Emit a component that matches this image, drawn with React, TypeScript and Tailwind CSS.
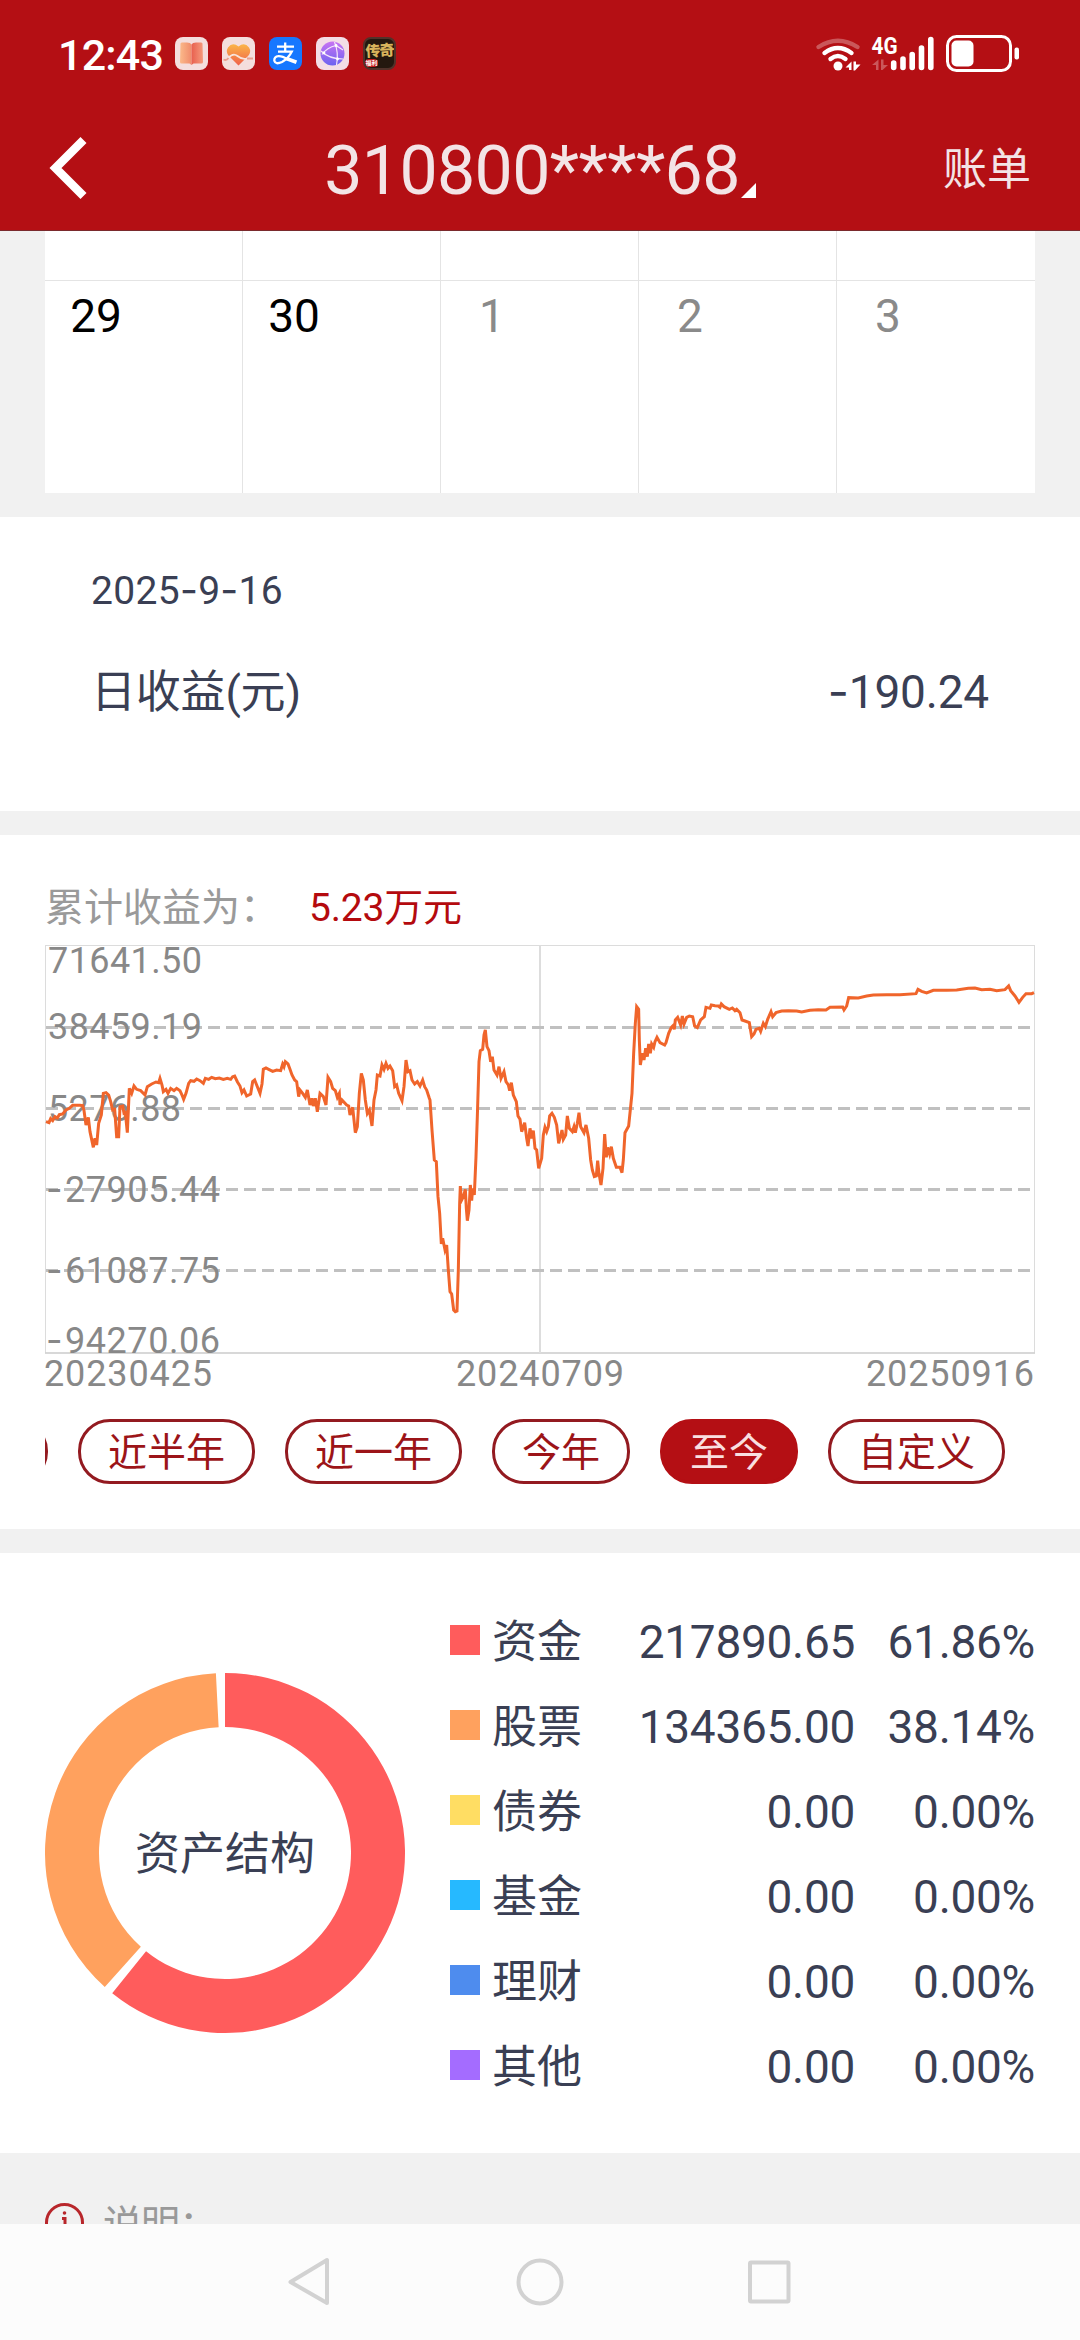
import type { ReactNode } from "react";

type Asset = {
  name: string;
  amount: string;
  percent: string;
  color: string;
};

const assets: Asset[] = [
  { name: "资金", amount: "217890.65", percent: "61.86%", color: "bg-[#ff5c5c]" },
  { name: "股票", amount: "134365.00", percent: "38.14%", color: "bg-[#ffa15e]" },
  { name: "债券", amount: "0.00", percent: "0.00%", color: "bg-[#ffdd63]" },
  { name: "基金", amount: "0.00", percent: "0.00%", color: "bg-[#26b9ff]" },
  { name: "理财", amount: "0.00", percent: "0.00%", color: "bg-[#4e8cee]" },
  { name: "其他", amount: "0.00", percent: "0.00%", color: "bg-[#a46cff]" }
];

const days = [
  { day: "29", current: true },
  { day: "30", current: true },
  { day: "1", current: false },
  { day: "2", current: false },
  { day: "3", current: false }
];

const ranges = [
  { label: "近半年", active: false },
  { label: "近一年", active: false },
  { label: "今年", active: false },
  { label: "至今", active: true },
  { label: "自定义", active: false }
];

const gridLines = [82.5, 163.5, 244.5, 325.5];

const yLabels = [
  { text: "71641.50", x: 3, y: 28, length: 154 },
  { text: "38459.19", x: 3, y: 94, length: 154 },
  { text: "5276.88", x: 3, y: 176, length: 133 },
  { text: "27905.44", x: 20, y: 257, length: 155 },
  { text: "61087.75", x: 20, y: 338, length: 155 },
  { text: "94270.06", x: 20, y: 408, length: 155 }
];

const xLabels = [
  { text: "20230425", x: -1 },
  { text: "20240709", x: 411 },
  { text: "20250916", x: 821 }
];

// three units per pixel
const profitLine =
  "48,785 57,788 62,776 68,782 75,770 82,774 88,764 98,762 108,750 118,745 128,736 150,736 158,737 162,752 168,795 175,772 180,815 190,862 195,835 200,855 206,790 214,765 220,700 228,698 236,705 242,725 248,750 254,748 260,830 266,830 270,740 278,738 282,760 286,758 292,818 298,685 305,700 312,678 320,688 332,692 345,705 352,680 365,672 378,666 386,668 390,655 396,675 400,695 408,688 414,700 422,685 432,692 440,685 450,692 456,705 461,718 468,700 476,670 482,662 492,664 500,657 510,662 520,670 526,655 536,658 545,652 556,656 568,654 580,658 592,655 602,658 608,650 614,648 622,665 630,678 636,698 642,690 650,708 662,702 668,665 674,660 680,675 690,700 696,672 700,628 708,624 716,628 728,634 740,630 752,632 758,612 762,620 766,605 774,612 780,628 786,645 794,660 800,665 806,710 810,690 818,700 826,712 832,690 840,735 846,715 850,738 856,715 862,755 870,700 880,710 888,735 894,652 902,665 908,685 916,692 922,712 928,700 930,735 936,720 950,735 956,738 960,765 968,742 976,818 982,800 988,700 994,640 1000,660 1006,720 1012,760 1018,750 1026,798 1032,720 1038,690 1042,645 1050,648 1056,615 1062,628 1068,610 1074,625 1080,618 1088,632 1094,680 1100,675 1106,700 1116,722 1122,680 1128,600 1134,635 1140,632 1146,660 1154,672 1162,665 1170,678 1178,660 1184,680 1190,690 1198,715 " +
  "1200,720 1206,810 1213,900 1219,905 1224,1010 1229,1060 1234,1152 1238,1135 1245,1170 1250,1155 1255,1230 1260,1295 1265,1302 1271,1350 1276,1355 1281,1353 1285,1230 1289,1030 1291,978 1294,1022 1300,1010 1306,988 1309,1045 1312,1082 1317,1050 1321,975 1325,1022 1328,985 1333,1005 1338,890 1342,770 1347,605 1351,572 1358,568 1362,525 1366,510 1371,560 1377,572 1382,605 1387,590 1392,630 1401,645 1407,620 1413,655 1422,635 1428,665 1435,675 1439,692 1444,668 1450,705 1459,725 1464,768 1470,778 1475,815 1484,788 1490,835 1494,858 1500,805 1505,835 1510,812 1515,865 1520,870 1526,925 1535,895 1540,825 1545,802 1550,815 1555,800 1559,768 1566,760 1573,772 1580,795 1586,850 1596,810 1600,838 1607,825 1612,768 1618,805 1627,815 1632,800 1636,818 1642,790 1647,758 1652,800 1662,818 1668,795 1676,835 1682,900 1687,930 1693,950 1699,948 1703,902 1707,940 1713,975 1719,925 1724,822 1729,892 1733,862 1739,882 1744,860 1750,895 1759,922 1770,922 1776,938 1780,900 1785,818 1796,798 1806,700 1811,580 1816,490 1820,440 1826,448 1828,540 1831,615 1837,580 1842,600 1847,565 1852,590 1856,552 1861,580 1865,552 1871,562 1875,545 1881,532 1890,548 1904,555 " +
  "1908,548 1916,520 1924,502 1929,497 1933,508 1936,480 1943,472 1952,495 1957,468 1962,492 1970,472 1978,468 1988,470 1994,498 2002,503 2012,480 2023,470 2028,442 2040,445 2044,435 2055,437 2065,438 2070,442 2074,432 2082,440 2098,448 2107,444 2115,452 2120,448 2130,458 2136,480 2145,483 2158,488 2165,530 2172,522 2178,508 2188,505 2192,514 2200,490 2206,500 2213,478 2223,455 2228,470 2238,458 2255,453 2275,452 2300,453 2315,456 2340,451 2365,449 2388,450 2400,442 2438,441 2442,450 2450,438 2456,413 2485,414 2510,408 2530,405 2570,404 2610,404 2658,401 2664,388 2675,394 2690,399 2710,391 2750,391 2780,390 2815,385 2835,384 2855,389 2880,388 2900,392 2925,389 2936,378 2942,392 2955,408 2967,427 2978,412 2988,401 3005,401 3012,398";

function point(radius: number, angle: number) {
  const rad = (angle * Math.PI) / 180;
  return `${180 + radius * Math.sin(rad)} ${180 - radius * Math.cos(rad)}`;
}

function ringSlice(start: number, end: number) {
  const large = end - start > 180 ? 1 : 0;
  return `M${point(180, start)} A180 180 0 ${large} 1 ${point(180, end)} L${point(126, end)} A126 126 0 ${large} 0 ${point(126, start)} Z`;
}

function AppIcon({ className, children }: { className: string; children: ReactNode }) {
  return (
    <div className={`relative h-[33px] w-[33px] shrink-0 overflow-hidden rounded-[8px] ${className}`}>{children}</div>
  );
}

function StatusBar() {
  return (
    <div className="flex h-[106px] items-center justify-between pl-[58px] pr-[60px] text-white">
      <div className="flex items-center gap-[14px]">
        <span className="mr-[-2px] w-[105px] pt-[4px] text-[43px] font-medium leading-none tracking-[-0.8px]">12:43</span>
        <AppIcon className="bg-[#f4dedd]">
          <svg viewBox="0 0 33 33" className="h-full w-full">
            <defs>
              <linearGradient id="bookL">
                <stop offset="0" stopColor="#fbb98a" />
                <stop offset="1" stopColor="#f08c6c" />
              </linearGradient>
              <linearGradient id="bookR">
                <stop offset="0" stopColor="#e8604f" />
                <stop offset="1" stopColor="#f59a7c" />
              </linearGradient>
            </defs>
            <path d="M5.5 6.5 Q6 5 8 5.5 H12 Q15.5 5.5 16.5 7.5 V28 L14.5 26.5 H6.5 Q5 26.5 5 25 Z" fill="url(#bookL)" />
            <path d="M27.5 6.5 Q27 5 25 5.5 H21 Q17.5 5.5 16.5 7.5 V28 L18.5 26.5 H26.5 Q28 26.5 28 25 Z" fill="url(#bookR)" />
          </svg>
        </AppIcon>
        <AppIcon className="bg-[#f4dedd]">
          <svg viewBox="0 0 33 33" className="h-full w-full">
            <defs>
              <linearGradient id="heart" x2="0" y2="1">
                <stop offset="0" stopColor="#fbb548" />
                <stop offset="1" stopColor="#f0604a" />
              </linearGradient>
            </defs>
            <path d="M16.5 28.5 L6.5 18.5 Q3.5 14.5 6 10.5 Q10.5 4.5 16.5 9.5 Q22.5 4.5 27 10.5 Q29.5 14.5 26.5 18.5 Z" fill="url(#heart)" />
            <path d="M6.5 21 Q11 15.5 15.5 19 Q20.5 23 25 21.5" fill="none" stroke="#f8e4dc" strokeWidth="1.8" />
            <path d="M1.5 22.5 Q4.5 24 6.5 21 M25 21.5 H31" fill="none" stroke="#e8a090" strokeWidth="1.8" />
          </svg>
        </AppIcon>
        <AppIcon className="bg-[#1677ff]">
          <svg viewBox="0 0 33 33" className="h-full w-full" fill="none" stroke="#fff" strokeWidth="2.3">
            <path d="M8 9.6 H25 M16.2 5.5 V14.5 M9 14.6 H22.8 Q19.5 21.5 13 25 Q6.5 28 5.3 23.8 Q5 19.5 9.5 19.2 Q13 19 19 22.5" />
            <path d="M18 21.8 L27.5 25.3" strokeWidth="3.8" />
          </svg>
        </AppIcon>
        <AppIcon className="bg-[#f3dde6]">
          <svg viewBox="0 0 33 33" className="h-full w-full">
            <defs>
              <linearGradient id="globe" x2="0" y2="1">
                <stop offset="0" stopColor="#c874f2" />
                <stop offset="1" stopColor="#6c62f0" />
              </linearGradient>
            </defs>
            <circle cx="16.5" cy="16.5" r="12" fill="url(#globe)" />
            <path d="M18.5 5 Q23 16 20.5 28 M5 14 Q13 22 27 22 M6 17.5 Q11 10.5 20 8.5 L27 13" fill="none" stroke="#f6e6fa" strokeWidth="1.2" />
            <circle cx="8" cy="16" r="1.4" fill="#fff" />
            <circle cx="20" cy="8.5" r="1.4" fill="#fff" />
            <circle cx="21.5" cy="22" r="1.4" fill="#fff" />
          </svg>
        </AppIcon>
        <AppIcon className="border-2 border-[#51322a] bg-[#24180f]">
          <div className="-rotate-3 pt-[3px] text-center text-[15px] font-black leading-[18px] tracking-[-1px] text-[#d9b45c]">
            传奇
          </div>
          <div className="absolute bottom-[1px] left-0 h-[8px] w-[13px] rounded-sm bg-[#c31b1c] text-center text-[6px] font-bold leading-[8px] text-white">
            福利
          </div>
        </AppIcon>
      </div>
      <svg width="226" height="44" viewBox="793 31 226 44" fill="none" strokeLinecap="round">
        <g stroke="#fff" strokeWidth="4.4">
          <path d="M817.5 47 Q836.8 34.5 856.5 47" opacity=".3" />
          <path d="M823.5 53 Q836.8 43 850.5 53" />
          <path d="M829.5 59 Q836.8 53 844.5 59" />
        </g>
        <circle cx="837" cy="66" r="4.5" fill="#fff" />
        <g fill="#fff">
          <path d="M844.5 67.5 L850.5 61.5 V70 H848 V67.5 Z M852.5 61.5 H855 V64.5 H859.5 L854 70.5 H852.5 Z" />
          <path d="M871 65 L877.5 59.5 V70 H875 V65 Z M880 59.5 H882.5 V65 H887 L881.5 70 H880 Z" opacity=".3" />
        </g>
        <text x="870.5" y="54" fill="#fff" fontSize="23" fontWeight="700" textLength="26" lengthAdjust="spacingAndGlyphs">
          4G
        </text>
        <path d="M892.7 63 V67.5 M902 59 V67.5 M911.2 54.5 V67.5 M920.5 48 V67.5 M929.8 39.5 V67.5" stroke="#fff" strokeWidth="5.6" />
        <rect x="946.5" y="36.5" width="63" height="34" rx="9" stroke="#fff" strokeWidth="3" />
        <rect x="950.5" y="40.5" width="22" height="26" rx="5" fill="#fff" />
        <rect x="1013.5" y="47.5" width="4.5" height="12" rx="2" fill="#fff" />
      </svg>
    </div>
  );
}

function Header() {
  return (
    <header className="h-[231px] shrink-0 border-b border-[#7a2a2d] bg-[#b40f14]">
      <StatusBar />
      <div className="grid h-[124px] grid-cols-[240px_1fr_240px] items-center text-[#f3e4e6]">
        <svg width="100" height="80" viewBox="0 128 100 80" fill="none">
          <path d="M83.5 140 L55.5 168 L83.5 196" stroke="#fff" strokeWidth="8.5" />
        </svg>
        <div className="flex items-end justify-center pt-[6px] text-[68px] leading-none">
          <span className="tracking-[-0.6px]">310800****68</span>
          <svg width="15" height="15" viewBox="0 0 15 15" className="mb-[7px] ml-[1px]">
            <path d="M15 0 V15 H0 Z" fill="#fff" />
          </svg>
        </div>
        <div className="pr-[49px] pt-[3px] text-right text-[44px] leading-none">账单</div>
      </div>
    </header>
  );
}

function Calendar() {
  return (
    <div className="mx-[45px] mb-6 bg-white">
      <div className="grid grid-cols-5">
        {days.map(({ day, current }, i) => (
          <div key={day} className={i < 4 ? "border-r border-[#e4e4e4]" : ""}>
            <div className="h-[50px] border-b border-[#e4e4e4]" />
            <div
              className={`h-[212px] w-[102px] pt-[12px] text-center text-[46px] leading-none ${
                current ? "text-black" : "text-[#8a8a8a]"
              }`}
            >
              {day}
            </div>
          </div>
        ))}
      </div>
    </div>
  );
}

function Dash() {
  return <span className="font-['Inter']">-</span>;
}

function DailyProfit() {
  return (
    <section className="mb-6 h-[294px] bg-white px-[91px] pt-[53px] text-[#3a3f54]">
      <div className="h-[39px] text-[39px] leading-[39px] tracking-[0.3px]">
        2025
        <Dash />9<Dash />
        16
      </div>
      <div className="mt-[59px] flex items-baseline justify-between leading-none">
        <span className="text-[45px] leading-[46px] tracking-[-0.2px]">日收益(元)</span>
        <span className="text-[46px] leading-[46px] tracking-[-0.2px]">
          <Dash />
          190.24
        </span>
      </div>
    </section>
  );
}

function ProfitChart() {
  return (
    <svg width="990" height="450" viewBox="0 0 990 450" className="mt-[17px] block overflow-visible" fill="none">
      <rect x="0.5" y="0.5" width="989" height="407.5" stroke="#dcdcdc" />
      <path d="M0 408 H990" stroke="#d0d0d0" strokeWidth="1.5" />
      <path d="M495 0 V408" stroke="#dddddd" strokeWidth="2" />
      {gridLines.map((y) => (
        <path key={y} d={`M1 ${y} H989`} stroke="#c0c0c0" strokeWidth="3" strokeDasharray="12 6" />
      ))}
      <g fill="#888888" fontSize="36">
        {yLabels.map(({ text, x, y, length }) => (
          <text key={text} x={x} y={y} textLength={length}>
            {text}
          </text>
        ))}
        {[257, 338, 408].map((y) => (
          <text key={y} x="1" y={y} fontFamily="Inter">
            -
          </text>
        ))}
        {xLabels.map(({ text, x }) => (
          <text key={text} x={x} y="440.5" textLength="168">
            {text}
          </text>
        ))}
      </g>
      <g transform="translate(-15 -85) scale(0.33333)">
        <polyline points={profitLine} stroke="#f0652b" strokeWidth="9" />
      </g>
    </svg>
  );
}

function CumulativeProfit() {
  return (
    <section className="mb-6 h-[694px] bg-white px-[45px] pt-[54px]">
      <div className="flex h-[39px] text-[39px] leading-none">
        <span className="w-[264px] text-[#9a9a9a]">累计收益为：</span>
        <span className="tracking-[-0.2px] text-[#b40a0e]">5.23万元</span>
      </div>
      <ProfitChart />
      <div className="mt-6 flex justify-start gap-[30px] overflow-hidden">
        <div className="-ml-[174px] h-[65px] w-[177px] shrink-0 rounded-[32px] border-3 border-[#931a20]" />
        {ranges.map(({ label, active }) => (
          <div
            key={label}
            className={`flex h-[65px] shrink-0 items-center justify-center rounded-[32px] border-3 px-[27px] pt-[4px] text-[39px] leading-none ${
              active ? "border-[#b40f14] bg-[#b40f14] text-[#f9dfe1]" : "border-[#931a20] text-[#9c1418]"
            }`}
          >
            {label}
          </div>
        ))}
      </div>
    </section>
  );
}

function AssetStructure() {
  return (
    <section className="flex h-[600px] bg-white px-[45px] text-[#3a3f54]">
      <div className="relative mt-[120px] h-[360px] w-[360px]">
        <svg width="360" height="360" viewBox="0 0 360 360">
          <path d={ringSlice(0, 218.8)} fill="#ff5c5c" />
          <path d={ringSlice(221.9, 357.1)} fill="#ffa15e" />
        </svg>
        <div className="absolute inset-0 flex items-center justify-center pt-[3px] text-[45px] leading-none">资产结构</div>
      </div>
      <div className="ml-[45px] mt-[46px] flex-1">
        {assets.map(({ name, amount, percent, color }) => (
          <div key={name} className="flex h-[85px] items-center text-[46px] leading-none">
            <div className={`mb-[4px] h-[30px] w-[30px] ${color}`} />
            <div className="ml-[12px] pt-[2px] text-[45px] leading-[46px]">{name}</div>
            <div className="flex-1 text-right tracking-[-0.3px]">{amount}</div>
            <div className="w-[180px] text-right tracking-[-0.3px]">{percent}</div>
          </div>
        ))}
      </div>
    </section>
  );
}

function SystemNav() {
  return (
    <nav className="h-[116px] shrink-0 bg-[#fcfcfc]">
      <svg width="1080" height="116" viewBox="0 2224 1080 116" fill="none" stroke="#d2d2d2" strokeWidth="4" strokeLinejoin="round">
        <path d="M327 2260 V2303 L290.5 2282 Z" />
        <circle cx="540" cy="2282" r="21.5" />
        <rect x="750" y="2262.5" width="38.5" height="39" rx="1" />
      </svg>
    </nav>
  );
}

export default function App() {
  return (
    <div className="flex h-[2340px] w-[1080px] flex-col overflow-hidden bg-[#f1f1f1] font-['Roboto','Noto_Sans_CJK_SC',sans-serif]">
      <Header />
      <main className="h-[1993px] overflow-hidden">
        <Calendar />
        <DailyProfit />
        <CumulativeProfit />
        <AssetStructure />
        <div className="flex h-[90px] pl-[45px] pt-[50px] text-[39px] leading-none text-[#999999]">
          <svg width="39" height="39" viewBox="0 0 39 39" fill="none" stroke="#b8262b">
            <circle cx="19.5" cy="19.5" r="18" strokeWidth="3" />
            <circle cx="19.5" cy="10" r="1.8" fill="#b8262b" stroke="none" />
            <path d="M17 15.5 H20 V29" strokeWidth="3" />
          </svg>
          <span className="ml-[19px] pt-[3px] tracking-[-1px]">说明：</span>
        </div>
      </main>
      <SystemNav />
    </div>
  );
}
